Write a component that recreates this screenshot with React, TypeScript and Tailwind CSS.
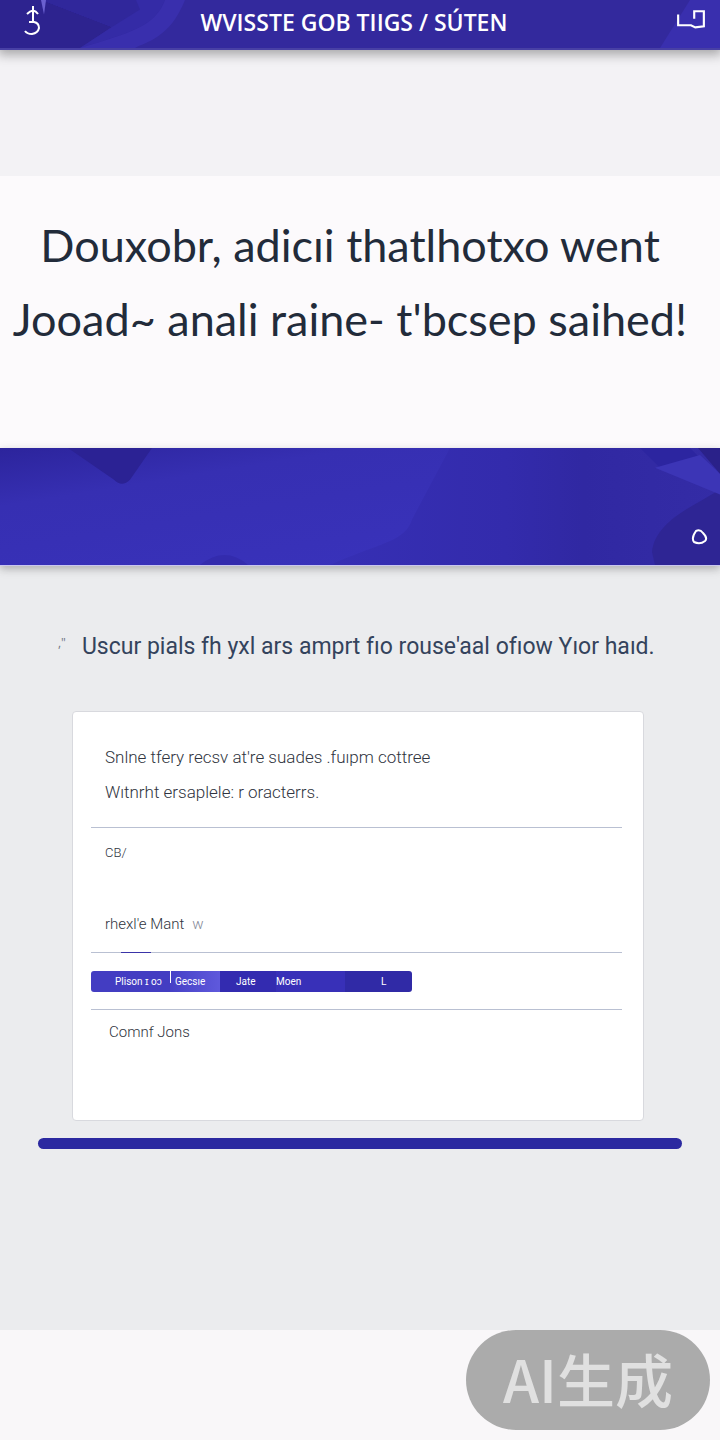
import { clsx } from "clsx";

const tabs = [
  { label: "Plison ɪ oɔ", className: "w-[79px] bg-[#433dc2] pl-6 text-left" },
  { label: "Gecsıe", className: "w-[50px] bg-linear-to-r from-[#4640c6] to-[#5f59dc] pl-[5px] text-left" },
  { label: "Jate", className: "w-[56px] bg-[#332bb0] pl-4 text-left" },
  { label: "Moen", className: "w-[69px] bg-[#3830b8] text-left" },
  { label: "L", className: "w-[67px] bg-[#302aa6] pl-9 text-left" },
];

const HeaderFacets = () => (
  <svg
    aria-hidden="true"
    className="absolute inset-0 h-full w-full"
    viewBox="0 0 720 50"
    preserveAspectRatio="none"
  >
    <rect width="720" height="50" fill="#33299d" />
    <path d="M0 0H42L112 28L80 50H0Z" fill="#2d238f" />
    <path d="M42 0H165C155 28 130 34 80 50L112 28Z" fill="#342ba6" />
    <path d="M165 0H185C170 40 145 44 135 50H80C130 34 155 28 165 0Z" fill="#392fad" />
    <path d="M42 0L112 28L140 10L136 0Z" fill="#30279b" />
    <path d="M41 0H46L44 15Z" fill="#6a60d0" />
    <path d="M690 0H720V50H660Z" fill="#392fae" />
  </svg>
);

const BannerFacets = () => (
  <svg
    aria-hidden="true"
    className="absolute inset-0 h-full w-full"
    viewBox="0 0 720 118"
    preserveAspectRatio="none"
  >
    <defs>
      <linearGradient id="banner-left" x1="0" y1="0" x2="1" y2="1">
        <stop offset="0" stopColor="#2c249c" />
        <stop offset="0.25" stopColor="#362fb2" />
        <stop offset="1" stopColor="#3a33be" />
      </linearGradient>
      <linearGradient id="banner-right" x1="0" y1="0" x2="1" y2="0">
        <stop offset="0" stopColor="#362fb4" />
        <stop offset="0.45" stopColor="#332bac" />
        <stop offset="0.65" stopColor="#3028a2" />
        <stop offset="1" stopColor="#342ca6" />
      </linearGradient>
    </defs>
    <rect width="720" height="118" fill="url(#banner-left)" />
    <path d="M68 0H152L130 32Q122 40 114 32Z" fill="#2b2294" />
    <path d="M450 0H720V118H330C380 95 405 95 412 72Z" fill="url(#banner-right)" />
    <path d="M720 42C690 60 655 75 652 105L655 118H720Z" fill="#2e2594" />
    <path d="M640 0L660 20L698 8L690 0Z" fill="#2c25a0" />
    <path d="M655 20L700 7L720 26V47Z" fill="#3c35b6" />
    <path d="M698 0H720V26Z" fill="#2a2189" />
    <path d="M200 118Q225 98 248 118Z" fill="#332bad" />
  </svg>
);

const Header = () => (
  <header className="relative z-10 h-[50px] border-b-2 border-[#4840a5] bg-[#33299d] shadow-[0_3px_10px_2px_rgba(60,60,60,0.4)]">
    <HeaderFacets />
    <div className="relative flex h-11 items-center justify-between pr-[14px] pl-5 text-white">
      <button type="button" aria-label="Back">
        <svg width="24" height="32" viewBox="0 0 24 32" fill="none" stroke="currentColor" strokeWidth="2">
          <path d="M13 0V15M7 8Q10 5 13 4.500Q16 5 18 8M9 16H14Q19 17 19 22Q18 27 12 28Q7 28 5 25" />
        </svg>
      </button>
      <h1 className="pr-3 text-[23px] font-semibold whitespace-nowrap">WVISSTE GOB TIIGS / SÚTEN</h1>
      <button type="button" aria-label="Menu">
        <svg width="30" height="24" viewBox="0 0 28 22" fill="none" stroke="currentColor" strokeWidth="2">
          <path d="M2 4V14H14L18 16L26 15V1H17V8" />
        </svg>
      </button>
    </div>
  </header>
);

const Divider = ({ accent = false }: { accent?: boolean }) => (
  <div className="h-px bg-[#b9c0d2]">
    <div className={clsx("ml-[30px] h-px w-[30px]", accent && "bg-[#3a34a8]")} />
  </div>
);

const DetailsCard = () => (
  <section className="mr-[76px] ml-[72px] h-[410px] rounded border border-[#d8d9de] bg-white pr-[21px] pl-[18px] font-['Roboto',sans-serif] text-[#2f3440]">
    <div className="flex h-[115px] flex-col justify-end pb-[17px] pl-[14px] text-[17px] leading-[35px] font-light">
      <p className="whitespace-nowrap">Snlne tfery recsv at're suades .fuıpm cottree</p>
      <p className="whitespace-nowrap">Wıtnrht ersaplele: r oracterrs.</p>
    </div>
    <Divider />
    <div className="flex h-[124px] flex-col justify-between pt-4 pb-[18px] pl-[14px]">
      <p className="text-[13px] leading-[18px] font-light">CB/</p>
      <p className="flex gap-2 text-[15px] leading-5 font-light">
        rhexl'e Mant <span className="text-[#858997]">w</span>
      </p>
    </div>
    <Divider accent />
    <div className="flex h-14 items-center">
      <div className="flex h-[21px] overflow-hidden rounded-[3px] text-[10px] text-white">
        {tabs.map((tab) => (
          <button key={tab.label} type="button" className={clsx("relative whitespace-nowrap", tab.className)}>
            {tab.label === "Gecsıe" && <span className="absolute top-0 left-0 h-3 w-px bg-white" />}
            {tab.label}
          </button>
        ))}
      </div>
    </div>
    <Divider />
    <p className="pt-3 pl-[18px] text-[15px] leading-5 font-light">Comnf Jons</p>
  </section>
);

const App = () => {
  return (
    <div className="bg-[#fbf9fb] font-['Open_Sans','Noto_Sans',sans-serif]">
      <Header />
      <div className="h-[126px] bg-[#f3f2f5]" />

      <section className="h-[272px] bg-[#fcfafc] pt-8 pr-5 text-center">
        <h2 className="font-['Lato',sans-serif] text-[45px] leading-[74px] whitespace-nowrap text-[#222b3a]">
          Douxobr, adicıi thatlhotxo went
          <br />
          Jooad~ anali raine- t'bcsep saihed!
        </h2>
      </section>

      <section className="relative z-10 h-[118px] border-b border-[#c9c6ef] bg-[#352dae] shadow-[0_3px_8px_rgba(60,60,60,0.35)]">
        <BannerFacets />
        <div className="relative flex h-full items-end justify-end pr-3 pb-5">
          <button type="button" aria-label="Record">
            <svg width="18" height="16" viewBox="0 0 18 16" fill="none" stroke="white" strokeWidth="2">
              <path d="M6 2Q10 0 13 4Q18 9 15 12Q10 16 4 13Q1 9 6 2Z" />
            </svg>
          </button>
        </div>
      </section>

      <main className="h-[764px] bg-[#ebecee]">
        <div className="flex h-[145px] items-center gap-4 pt-4 pl-[58px]">
          <span className="pb-2 text-xs text-[#707684]">,"</span>
          <p className="font-['Roboto',sans-serif] text-[23px] leading-8 whitespace-nowrap text-[#34435c]">
            Uscur pials fh yxl ars amprt fıo rouse'aal ofıow Yıor haıd.
          </p>
        </div>
        <DetailsCard />
        <div className="mx-[38px] mt-[17px] h-[11px] rounded-full bg-[#2b29a0]" />
      </main>

      <footer className="flex h-[110px] items-start justify-end bg-[#f9f7f9] pr-[10px]">
        <div className="flex h-[100px] w-[244px] items-center justify-center rounded-full bg-[#ababab] pb-1 font-['Noto_Sans_CJK_SC',sans-serif] text-[58px] font-medium text-[#e0e0e0]">
          AI生成
        </div>
      </footer>
    </div>
  );
};

export default App;
